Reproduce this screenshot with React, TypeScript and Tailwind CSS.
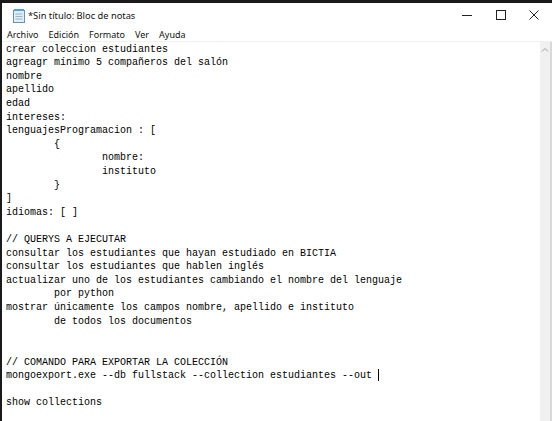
import React from "react";

const lines = [
  "crear coleccion estudiantes",
  "agreagr mínimo 5 compañeros del salón",
  "nombre",
  "apellido",
  "edad",
  "intereses:",
  "lenguajesProgramacion : [",
  "        {",
  "                nombre:",
  "                instituto",
  "        }",
  "]",
  "idiomas: [ ]",
  "",
  "// QUERYS A EJECUTAR",
  "consultar los estudiantes que hayan estudiado en BICTIA",
  "consultar los estudiantes que hablen inglés",
  "actualizar uno de los estudiantes cambiando el nombre del lenguaje",
  "        por python",
  "mostrar únicamente los campos nombre, apellido e instituto",
  "        de todos los documentos",
  "",
  "",
  "// COMANDO PARA EXPORTAR LA COLECCIÓN",
  "mongoexport.exe --db fullstack --collection estudiantes --out ",
  "",
  "show collections",
];

function NotepadIcon() {
  return (
    <svg width="14" height="15" viewBox="0 0 14 15">
      <rect x="1.5" y="2.5" width="11" height="12" fill="#dfeef8" stroke="#6d8fa8" />
      <rect x="2" y="1" width="10" height="2" fill="#4fa3d9" />
      <line x1="3.5" y1="6" x2="10.5" y2="6" stroke="#9ab4c6" />
      <line x1="3.5" y1="8.5" x2="10.5" y2="8.5" stroke="#9ab4c6" />
      <line x1="3.5" y1="11" x2="10.5" y2="11" stroke="#9ab4c6" />
    </svg>
  );
}

const uiFont = { fontFamily: '"Noto Sans", "Liberation Sans", sans-serif' };

export default function App() {
  return (
    <div className="w-[552px] h-[421px] bg-[#1a1a1a] pt-[3px] pl-[2px] overflow-hidden">
      <div className="w-[550px] h-[418px] bg-white flex flex-col">
        {/* Title bar */}
        <div className="h-[24px] flex items-center shrink-0">
          <div className="pl-[10px] pr-[2px] flex items-center pt-[1px]">
            <NotepadIcon />
          </div>
          <div className="text-[9.3px] leading-[12px] text-[#111] pt-[1px]" style={uiFont}>
            *Sin título: Bloc de notas
          </div>
          <div className="flex-1" />
          <div className="flex items-center h-full">
            <div className="w-[34px] h-full flex items-center justify-center">
              <svg width="10" height="10" viewBox="0 0 10 10">
                <line x1="0" y1="5.5" x2="10" y2="5.5" stroke="#222" strokeWidth="1" />
              </svg>
            </div>
            <div className="w-[34px] h-full flex items-center justify-center">
              <svg width="10" height="10" viewBox="0 0 10 10">
                <rect x="0.5" y="0.5" width="9" height="9" fill="none" stroke="#222" strokeWidth="1" />
              </svg>
            </div>
            <div className="w-[34px] h-full flex items-center justify-center pr-[2px]">
              <svg width="10" height="10" viewBox="0 0 10 10">
                <path d="M0.5 0.5 L9.5 9.5 M9.5 0.5 L0.5 9.5" stroke="#222" strokeWidth="1" />
              </svg>
            </div>
          </div>
        </div>
        {/* Menu bar */}
        <div
          className="h-[14px] flex items-center gap-[10px] pl-[5px] pt-[2px] text-[9px] leading-[12px] text-[#111] shrink-0"
          style={uiFont}
        >
          <span>Archivo</span>
          <span>Edición</span>
          <span>Formato</span>
          <span>Ver</span>
          <span>Ayuda</span>
        </div>
        <div className="h-[1px] bg-[#f0f0f0] shrink-0" />
        {/* Editor */}
        <div className="flex flex-1 min-h-0">
          <div
            className="flex-1 pl-[4px] pt-[0.5px] text-[10px] leading-[13.62px] text-black whitespace-pre overflow-hidden"
            style={{ fontFamily: '"Liberation Mono", "DejaVu Sans Mono", monospace' }}
          >
            {lines.map((l, i) => (
              <div key={i} className="h-[13.62px]">
                {l}
                {i === 24 && <span className="inline-block w-[1px] h-[12px] bg-black align-middle" />}
              </div>
            ))}
          </div>
          <div className="w-[10px] bg-[#f0f0f0] flex flex-col items-center shrink-0">
            <svg width="8" height="6" viewBox="0 0 8 6" className="mt-[5px]">
              <path d="M1 4.5 L4 1.5 L7 4.5" fill="none" stroke="#a0a0a0" strokeWidth="1" />
            </svg>
          </div>
          <div className="w-[2px] bg-[#d9d9d9] shrink-0" />
        </div>
      </div>
    </div>
  );
}
